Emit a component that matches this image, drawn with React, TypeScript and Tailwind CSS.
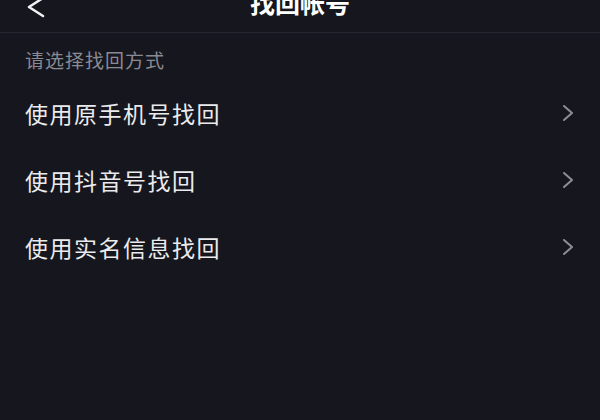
const options = ['使用原手机号找回', '使用抖音号找回', '使用实名信息找回'];

function ChevronRight() {
  return (
    <svg width="14" height="18" viewBox="0 0 14 18" fill="none" stroke="#8e8e96" strokeWidth="2" strokeLinecap="round" strokeLinejoin="round">
      <polyline points="3,2 11,9 3,16" />
    </svg>
  );
}

export default function App() {
  return (
    <div
      className="w-[600px] h-[420px] overflow-hidden bg-[#16161e] text-[#ebebed]"
      style={{ fontFamily: '"Noto Sans CJK SC", "Noto Sans", sans-serif' }}
    >
      {/* Header */}
      <div className="h-[33px] border-b border-[#272731] flex items-start">
        <div className="flex-1">
          <svg className="-mt-[4px] ml-[26px]" width="20" height="24" viewBox="0 0 20 24" fill="none" stroke="#f2f2f4" strokeWidth="2.5" strokeLinecap="round" strokeLinejoin="round">
            <polyline points="17,2 3,11 17,20" />
          </svg>
        </div>
        <div className="-mt-[14px] text-[25px] leading-[32px] font-bold text-white">找回帐号</div>
        <div className="flex-1" />
      </div>

      {/* Body */}
      <div className="pt-[15px]">
        <div className="px-[25px] text-[19px] leading-[24px] tracking-[1px] text-[#8a8a92] mb-[7px]">
          请选择找回方式
        </div>
        {options.map((label) => (
          <div key={label} className="h-[67px] flex items-center justify-between pl-[25px] pr-[25px]">
            <span className="text-[23px] leading-[30px] tracking-[1.5px]">{label}</span>
            <ChevronRight />
          </div>
        ))}
      </div>
    </div>
  );
}
